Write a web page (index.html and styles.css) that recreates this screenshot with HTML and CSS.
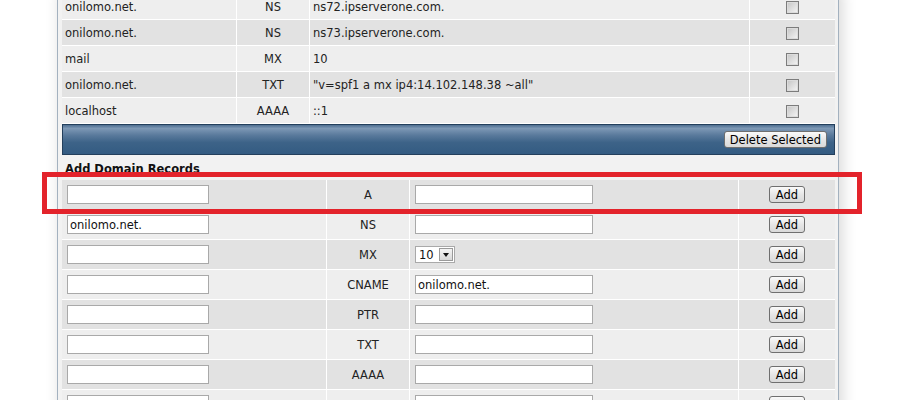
FILE: index.html
```html
<!DOCTYPE html>
<html lang="en">
<head>
    <meta charset="UTF-8">
    <title>DNS Records</title>
    <link rel="stylesheet" href="styles.css">
</head>
<body>
    <div class="page">
        <div class="panel">
            <table class="records">
                <colgroup>
                    <col class="c-name"><col class="c-type"><col class="c-value"><col class="c-check">
                </colgroup>
                <tr><td>onilomo.net.</td><td class="type">NS</td><td>ns72.ipserverone.com.</td><td class="check"><input type="checkbox"></td></tr>
                <tr><td>onilomo.net.</td><td class="type">NS</td><td>ns73.ipserverone.com.</td><td class="check"><input type="checkbox"></td></tr>
                <tr><td>mail</td><td class="type">MX</td><td>10</td><td class="check"><input type="checkbox"></td></tr>
                <tr><td>onilomo.net.</td><td class="type">TXT</td><td>"v=spf1 a mx ip4:14.102.148.38 ~all"</td><td class="check"><input type="checkbox"></td></tr>
                <tr><td>localhost</td><td class="type">AAAA</td><td>::1</td><td class="check"><input type="checkbox"></td></tr>
            </table>

            <div class="toolbar">
                <button class="btn">Delete Selected</button>
            </div>

            <h3 class="section-title">Add Domain Records</h3>

            <table class="add-records">
                <colgroup>
                    <col class="a-name"><col class="a-type"><col class="a-value"><col class="a-action">
                </colgroup>
                <tr><td><input type="text" class="field"></td><td class="type">A</td><td><input type="text" class="field wide"></td><td class="action"><button class="btn">Add</button></td></tr>
                <tr><td><input type="text" class="field" value="onilomo.net."></td><td class="type">NS</td><td><input type="text" class="field wide"></td><td class="action"><button class="btn">Add</button></td></tr>
                <tr><td><input type="text" class="field"></td><td class="type">MX</td><td>
                    <div class="select-wrap">
                        <select class="select"><option>10</option><option>20</option><option>30</option></select>
                        <span class="select-arrow"></span>
                    </div>
                </td><td class="action"><button class="btn">Add</button></td></tr>
                <tr><td><input type="text" class="field"></td><td class="type">CNAME</td><td><input type="text" class="field wide" value="onilomo.net."></td><td class="action"><button class="btn">Add</button></td></tr>
                <tr><td><input type="text" class="field"></td><td class="type">PTR</td><td><input type="text" class="field wide"></td><td class="action"><button class="btn">Add</button></td></tr>
                <tr><td><input type="text" class="field"></td><td class="type">TXT</td><td><input type="text" class="field wide"></td><td class="action"><button class="btn">Add</button></td></tr>
                <tr><td><input type="text" class="field"></td><td class="type">AAAA</td><td><input type="text" class="field wide"></td><td class="action"><button class="btn">Add</button></td></tr>
                <tr><td><input type="text" class="field"></td><td class="type"></td><td><input type="text" class="field wide"></td><td class="action"><button class="btn"></button></td></tr>
            </table>
        </div>

        <!-- annotation around the A record row -->
        <div class="highlight"></div>
    </div>
</body>
</html>
```

FILE: styles.css
```css
body {
    margin: 0;
    background: #fff;
    font-family: "DejaVu Sans", Verdana, sans-serif;
    font-size: 11.5px;
    color: #222;
    overflow: hidden;
}

.page {
    position: relative;
    margin-top: -11px;
    padding-left: 57px;
}

.panel {
    width: 773px;
    padding: 4px 3px 4px 4px;
    background: #f2f2f2;
    border: 1px solid #a3b1bf;
    box-shadow: 3px 0 14px rgba(0, 0, 0, 0.16);
}

table {
    width: 100%;
    table-layout: fixed;
    border-collapse: separate;
    border-spacing: 0;
}

td {
    padding: 0 3px;
    border-right: 1px solid #fff;
    border-bottom: 1px solid #fff;
    white-space: nowrap;
    overflow: hidden;
}

td:last-child {
    border-right: none;
}

.type {
    text-align: center;
}

/* existing records */
.c-name { width: 175px; }
.c-type { width: 73px; }
.c-value { width: 440px; }

.records td {
    height: 26px;
    box-sizing: border-box;
    padding-top: 1px;
}

.records tr:nth-child(odd) td { background: #eeeeee; }
.records tr:nth-child(even) td { background: #e2e2e2; }

.check {
    text-align: center;
}

.check input {
    appearance: none;
    -webkit-appearance: none;
    display: block;
    margin: 0 auto;
    width: 13px;
    height: 13px;
    border: 1px solid #7c7c7c;
    background: linear-gradient(135deg, #c4c4c4, #f6f6f6);
    box-shadow: inset 0 0 0 1px #dcdcdc;
    box-sizing: border-box;
}

.toolbar {
    display: flex;
    justify-content: flex-end;
    align-items: center;
    height: 29px;
    padding-right: 7px;
    border: 1px solid #233f5c;
    background: linear-gradient(#4f6f91 0%, #7d98b5 12%, #5a7a9c 35%, #3d6388 60%, #335b82 100%);
}

.section-title {
    margin: 0;
    padding-left: 3px;
    height: 25px;
    line-height: 28px;
    font-size: 11.5px;
    font-weight: bold;
    color: #111;
}

/* add records */
.a-name { width: 265px; }
.a-type { width: 83px; }
.a-value { width: 329px; }

.add-records td {
    height: 30px;
    box-sizing: border-box;
    padding: 0 5px;
}

.add-records .type {
    padding: 0 3px;
}

.add-records tr:nth-child(odd) td { background: #e2e2e2; }
.add-records tr:nth-child(even) td { background: #eeeeee; }

.field {
    display: block;
    width: 142px;
    height: 19px;
    box-sizing: border-box;
    margin: 0;
    padding: 0 2px;
    border: 1px solid #a9a9a9;
    background: #fff;
    font: inherit;
    color: #111;
}

.field.wide {
    width: 178px;
}

.action {
    text-align: center;
}

.btn {
    font: inherit;
    color: #000;
    height: 17px;
    padding: 0 5px;
    line-height: 14px;
    border: 1px solid #6f6f6f;
    border-radius: 3px;
    background: linear-gradient(#fafafa, #e6e6e6 50%, #d9d9d9);
    cursor: pointer;
    vertical-align: middle;
}

.action .btn {
    width: 36px;
    padding: 0;
}

.select-wrap {
    position: relative;
    width: 40px;
    height: 17px;
}

.select {
    appearance: none;
    -webkit-appearance: none;
    width: 40px;
    height: 17px;
    margin: 0;
    padding: 0 0 0 3px;
    border: 1px solid #a9a9a9;
    background: #fff;
    font: inherit;
    color: #111;
}

.select-arrow {
    position: absolute;
    top: 2px;
    right: 2px;
    width: 14px;
    height: 13px;
    box-sizing: border-box;
    border: 1px solid #9a9a9a;
    background: linear-gradient(#f4f4f4, #d8d8d8);
    pointer-events: none;
}

.select-arrow::after {
    content: "";
    position: absolute;
    left: 3px;
    top: 4px;
    border-left: 3.5px solid transparent;
    border-right: 3.5px solid transparent;
    border-top: 4px solid #111;
}

.highlight {
    position: absolute;
    left: 42px;
    top: 183px;
    width: 820px;
    height: 42px;
    box-sizing: border-box;
    border: 5px solid #e3232b;
    pointer-events: none;
}
```
